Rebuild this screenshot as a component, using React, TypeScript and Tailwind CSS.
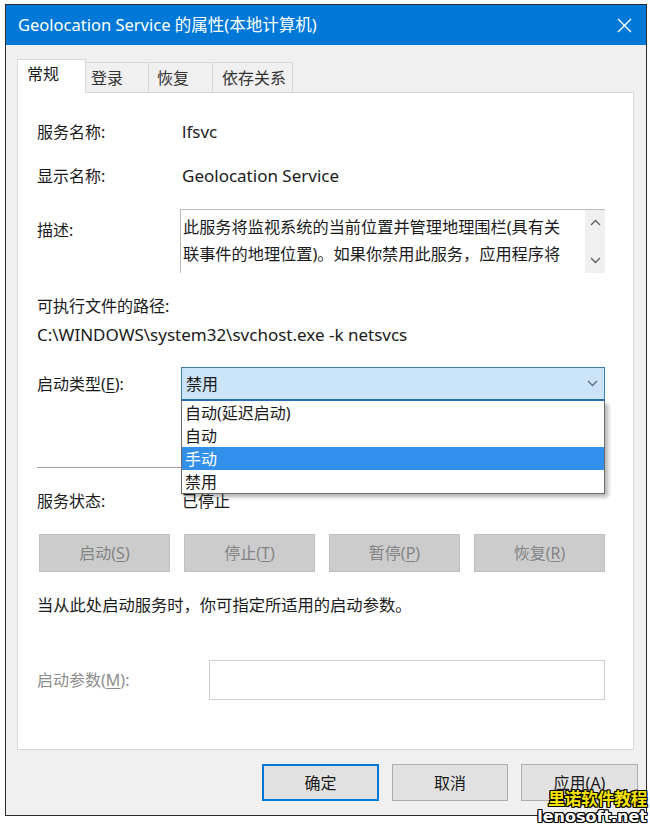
import React from "react";

const font = { fontFamily: '"Noto Sans", "Noto Sans CJK SC", sans-serif' };

const U = ({ children }: { children: React.ReactNode }) => <span className="underline underline-offset-2">{children}</span>;

const Chevron = ({ up = false, className = "" }: { up?: boolean; className?: string }) => (
  <svg width="11" height="7" viewBox="0 0 11 7" className={className}>
    <path d={up ? "M1 6 L5.5 1.5 L10 6" : "M1 1 L5.5 5.5 L10 1"} fill="none" stroke="currentColor" strokeWidth="1.3" />
  </svg>
);

const tabs = [
  { label: "登录", cls: "w-[63px] pl-[5px]" },
  { label: "恢复", cls: "w-[64px] pl-[8px]" },
  { label: "依存关系", cls: "w-[80px] pl-[9px]" },
];

const options = ["自动(延迟启动)", "自动", "手动", "禁用"];

const outline =
  "1px 1px 0 #000, -1px -1px 0 #000, 1px -1px 0 #000, -1px 1px 0 #000, 0 1px 0 #000, 1px 0 0 #000, 0 -1px 0 #000, -1px 0 0 #000";

export default function App() {
  return (
    <div className="relative w-[650px] h-[826px] bg-white pt-[4px] pl-[5px] overflow-hidden text-[#1a1a1a]" style={font}>
      <div className="w-[642px] h-[812px] border border-[#2e2e2e] bg-[#f0f0f0] flex flex-col">
        {/* title bar */}
        <div className="h-[40px] bg-[#0078d7] flex items-center justify-between pl-[12px] pr-[14px] text-white shrink-0">
          <span className="text-[16.5px]">Geolocation Service 的属性(本地计算机)</span>
          <svg width="15" height="15" viewBox="0 0 15 15">
            <path d="M1 1 L14 14 M14 1 L1 14" stroke="white" strokeWidth="1.4" />
          </svg>
        </div>

        <div className="pl-[11px] pt-[13px]">
          {/* tabs */}
          <div className="flex items-end h-[34px]">
            <div className="w-[69px] h-[34px] bg-white border border-b-0 border-[#d9d9d9] text-[16px] pl-[9px] pt-[2px] relative z-10 -mb-px">
              常规
            </div>
            {tabs.map((t) => (
              <div
                key={t.label}
                className={`${t.cls} h-[30px] border border-l-0 border-b-0 border-[#d9d9d9] flex items-center text-[16px] text-[#333]`}
              >
                {t.label}
              </div>
            ))}
          </div>

          {/* panel */}
          <div className="w-[617px] h-[658px] bg-white border border-[#d9d9d9] pl-[19px] pr-[28px] pt-[27px] text-[16px]">
            <div className="flex items-center h-[24px]">
              <span className="w-[145px]">服务名称:</span>
              <span className="text-[17px]">lfsvc</span>
            </div>
            <div className="flex items-center h-[24px] mt-[20px]">
              <span className="w-[145px]">显示名称:</span>
              <span className="text-[17px]">Geolocation Service</span>
            </div>
            <div className="flex mt-[21px]">
              <span className="w-[143px] pt-[9px]">描述:</span>
              <div className="flex-1 h-[64px] border border-[#bdbdbd] border-r-0 border-b-0 flex">
                <div className="flex-1 pl-[2px] pt-[4px] leading-[27px] text-[16.2px] whitespace-nowrap overflow-hidden">
                  <div>此服务将监视系统的当前位置并管理地理围栏(具有关</div>
                  <div>联事件的地理位置)。如果你禁用此服务，应用程序将</div>
                </div>
                <div className="w-[20px] bg-[#f0f0f0] flex flex-col items-center justify-between py-[9px] text-[#606060]">
                  <Chevron up />
                  <Chevron />
                </div>
              </div>
            </div>
            <div className="h-[24px] flex items-center mt-[21px]">可执行文件的路径:</div>
            <div className="h-[24px] flex items-center mt-[5px] text-[17px]">C:\WINDOWS\system32\svchost.exe -k netsvcs</div>

            {/* startup type */}
            <div className="flex items-center mt-[20px]">
              <span className="w-[144px]">
                启动类型(<U>E</U>):
              </span>
              <div className="flex-1 relative">
                <div className="h-[34px] bg-[#cce4f7] border border-[#3c7fb1] border-b-2 border-b-[#2a6fb8] flex items-center justify-between pl-[4px] pr-[6px]">
                  <span>禁用</span>
                  <Chevron className="text-[#5a6b7b]" />
                </div>
                <div className="absolute left-0 top-full w-full bg-white border border-[#6b6b6b] border-t-0 shadow-[3px_3px_4px_rgba(0,0,0,0.3)] z-20">
                  {options.map((o) => (
                    <div
                      key={o}
                      className={`h-[23px] flex items-center pl-[3px] ${o === "手动" ? "bg-[#3390ea] text-white" : ""}`}
                    >
                      {o}
                    </div>
                  ))}
                </div>
              </div>
            </div>

            <div className="h-px bg-[#a0a0a0] mt-[66px]" />

            <div className="flex items-center h-[24px] mt-[21px]">
              <span className="w-[145px]">服务状态:</span>
              <span>已停止</span>
            </div>

            <div className="grid grid-cols-4 gap-[14px] mt-[21px] ml-[2px]">
              {[
                ["启动(", "S", ")"],
                ["停止(", "T", ")"],
                ["暂停(", "P", ")"],
                ["恢复(", "R", ")"],
              ].map(([a, k, b]) => (
                <div
                  key={a}
                  className="h-[38px] bg-[#cccccc] border border-[#bfbfbf] flex items-center justify-center text-[#848484]"
                >
                  <span>
                    {a}
                    <U>{k}</U>
                    {b}
                  </span>
                </div>
              ))}
            </div>

            <div className="h-[24px] flex items-center mt-[21px] text-[16.3px]">当从此处启动服务时，你可指定所适用的启动参数。</div>

            <div className="flex items-center mt-[43px]">
              <span className="w-[172px] text-[#8d8d8d]">
                启动参数(<U>M</U>):
              </span>
              <div className="flex-1 h-[40px] border border-[#cfcfcf] bg-white" />
            </div>
          </div>

          {/* dialog buttons */}
          <div className="flex gap-[13px] mt-[14px] pl-[245px] text-[16px]">
            <div className="w-[117px] h-[37px] bg-[#e1e1e1] border-2 border-[#0078d7] flex items-center justify-center">确定</div>
            <div className="w-[116px] h-[37px] bg-[#e1e1e1] border border-[#adadad] flex items-center justify-center">取消</div>
            <div className="w-[117px] h-[37px] bg-[#e1e1e1] border border-[#adadad] flex items-center justify-center">应用(A)</div>
          </div>
        </div>
      </div>

      {/* watermark */}
      <div className="absolute right-[3px] bottom-0 flex flex-col items-end leading-none font-bold">
        <span className="text-[17px] text-[#f4e200] tracking-[-0.5px]" style={{ textShadow: outline }}>
          里诺软件教程
        </span>
        <span
          className="text-[16px] text-white mt-[2px] mb-[1px]"
          style={{ fontFamily: '"DejaVu Sans", sans-serif', textShadow: outline }}
        >
          lenosoft.net
        </span>
      </div>
    </div>
  );
}
